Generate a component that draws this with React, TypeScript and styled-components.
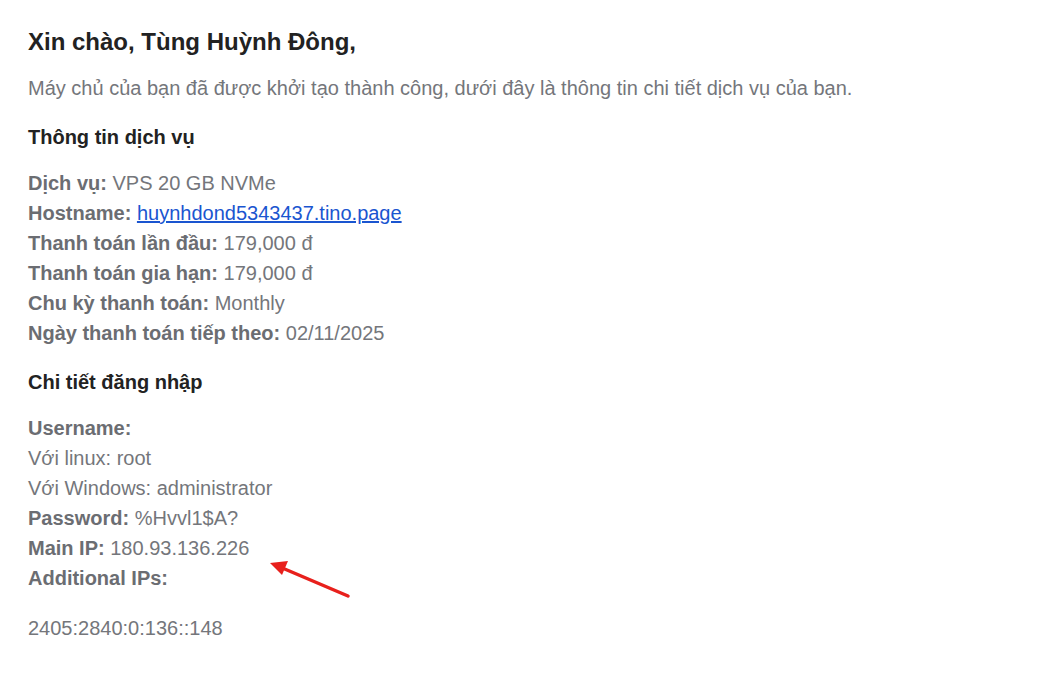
import React from "react";
import styled, { createGlobalStyle } from "styled-components";

const Global = createGlobalStyle`
  body { margin: 0; background: #fff; font-family: "Liberation Sans", Arial, sans-serif; }
`;

const Page = styled.div`
  position: relative;
  width: 1042px;
  height: 697px;
  padding: 27px 0 0 28px;
  box-sizing: border-box;
  color: #74767b;
  font-size: 20px;
  line-height: 30px;
`;

const Title = styled.h1`
  margin: 0;
  font-size: 24px;
  font-weight: bold;
  color: #222;
  line-height: 30px;
`;

const Para = styled.p<{ $top: number }>`
  margin: ${(p) => p.$top}px 0 0;
`;

const Sub = styled.h2<{ $top: number }>`
  margin: ${(p) => p.$top}px 0 0;
  font-size: 20px;
  font-weight: bold;
  color: #222;
  line-height: 30px;
`;

const Lines = styled.div<{ $top: number }>`
  margin-top: ${(p) => p.$top}px;
  display: flex;
  flex-direction: column;
`;

const B = styled.b`
  color: #6b6d72;
`;

const Link = styled.a`
  color: #1a55d0;
  text-decoration: underline;
`;

const Arrow = styled.svg`
  position: absolute;
  left: 262px;
  top: 555px;
`;

export default function App() {
  return (
    <Page>
      <Global />
      <Title>Xin chào, Tùng Huỳnh Đông,</Title>
      <Para $top={16}>
        Máy chủ của bạn đã được khởi tạo thành công, dưới đây là thông tin chi tiết dịch vụ của bạn.
      </Para>
      <Sub $top={19}>Thông tin dịch vụ</Sub>
      <Lines $top={16}>
        <span><B>Dịch vụ:</B> VPS 20 GB NVMe</span>
        <span><B>Hostname:</B> <Link href="#">huynhdond5343437.tino.page</Link></span>
        <span><B>Thanh toán lần đầu:</B> 179,000 đ</span>
        <span><B>Thanh toán gia hạn:</B> 179,000 đ</span>
        <span><B>Chu kỳ thanh toán:</B> Monthly</span>
        <span><B>Ngày thanh toán tiếp theo:</B> 02/11/2025</span>
      </Lines>
      <Sub $top={19}>Chi tiết đăng nhập</Sub>
      <Lines $top={16}>
        <span><B>Username:</B></span>
        <span>Với linux: root</span>
        <span>Với Windows: administrator</span>
        <span><B>Password:</B> %Hvvl1$A?</span>
        <span><B>Main IP:</B> 180.93.136.226</span>
        <span><B>Additional IPs:</B></span>
      </Lines>
      <Para $top={20}>2405:2840:0:136::148</Para>
      <Arrow width="95" height="50" viewBox="0 0 95 50">
        <line x1="86" y1="41" x2="18" y2="12" stroke="#e8201c" strokeWidth="3.5" strokeLinecap="round" />
        <polygon points="8,8 26,6 20,20" fill="#e8201c" />
      </Arrow>
    </Page>
  );
}
